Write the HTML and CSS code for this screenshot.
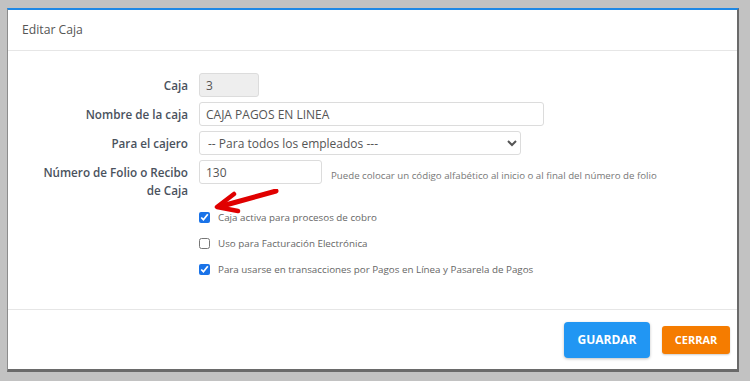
FILE: index.html
```html
<!DOCTYPE html>
<html lang="es">
<head>
  <meta charset="UTF-8">
  <title>Editar Caja</title>
  <link rel="stylesheet" href="styles.css">
</head>
<body>
  <div class="modal">
    <div class="modal-header">Editar Caja</div>
    <div class="modal-body">
      <div class="form-row">
        <label class="form-label">Caja</label>
        <input class="form-input input-caja" type="text" value="3" readonly>
      </div>
      <div class="form-row">
        <label class="form-label">Nombre de la caja</label>
        <input class="form-input input-nombre" type="text" value="CAJA PAGOS EN LINEA">
      </div>
      <div class="form-row">
        <label class="form-label">Para el cajero</label>
        <select class="form-input input-cajero">
          <option>-- Para todos los empleados ---</option>
        </select>
      </div>
      <div class="form-row">
        <label class="form-label">Número de Folio o Recibo de Caja</label>
        <div class="folio-group">
          <input class="form-input input-folio" type="text" value="130">
          <span class="help-text">Puede colocar un código alfabético al inicio o al final del número de folio</span>
        </div>
      </div>

      <div class="checks">
        <label class="check"><input type="checkbox" checked> Caja activa para procesos de cobro</label>
        <label class="check"><input type="checkbox"> Uso para Facturación Electrónica</label>
        <label class="check"><input type="checkbox" checked> Para usarse en transacciones por Pagos en Línea y Pasarela de Pagos</label>
        <!-- red marker arrow pointing at the first checkbox -->
        <svg class="arrow" width="70" height="30" viewBox="0 0 70 30">
          <path d="M62 2 L8 17" stroke="#e00000" stroke-width="5" stroke-linecap="round" fill="none"/>
          <path d="M20 5 L3 18 L24 22" stroke="#e00000" stroke-width="4.5" stroke-linecap="round" stroke-linejoin="round" fill="none"/>
        </svg>
      </div>
    </div>
    <div class="modal-footer">
      <button class="btn btn-guardar">GUARDAR</button>
      <button class="btn btn-cerrar">CERRAR</button>
    </div>
  </div>
</body>
</html>
```

FILE: styles.css
```css
body {
  margin: 0;
  padding: 8px 0 0 7px;
  background-color: #c2c2c2;
  font-family: "Open Sans", Arial, sans-serif;
  height: 381px;
  box-sizing: border-box;
  overflow: hidden;
}
.modal {
  width: 732px;
  height: 364px;
  box-sizing: border-box;
  background-color: #fff;
  border-top: 2px solid #1e88e5;
  border-left: 1px solid #8c8c8c;
  border-right: 2px solid #6a6a6a;
  border-bottom: 3px solid #6a6a6a;
  display: flex;
  flex-direction: column;
}
.modal-header {
  height: 41px;
  box-sizing: border-box;
  padding: 11px 0 0 14px;
  font-size: 12.2px;
  color: #555;
  border-bottom: 1px solid #e6e6e6;
}
.modal-body {
  flex: 1;
  padding: 22px 0 0 0;
  border-bottom: 1px solid #e6e6e6;
}
.form-row {
  display: grid;
  grid-template-columns: 180px 1fr;
  column-gap: 11px;
  margin-bottom: 5px;
}
.form-label {
  padding-left: 30px;
  text-align: right;
  font-size: 11.7px;
  font-weight: 600;
  color: #4a525d;
  line-height: 18px;
  padding-top: 3px;
}
.form-input {
  height: 24px;
  box-sizing: border-box;
  border: 1px solid #dcdcdc;
  border-radius: 3px;
  padding: 0 6px;
  font-family: "Open Sans", Arial, sans-serif;
  font-size: 12px;
  color: #555;
  background-color: #fff;
  outline: none;
}
.input-caja {
  width: 60px;
  background-color: #eeeeee;
}
.input-nombre {
  width: 345px;
}
.input-cajero {
  width: 322px;
  padding: 0 4px;
}
.folio-group {
  display: flex;
  align-items: flex-start;
}
.input-folio {
  width: 123px;
}
.help-text {
  margin-left: 9px;
  margin-top: 9px;
  font-size: 9.7px;
  color: #777;
}
.checks {
  position: relative;
  padding: 0 0 0 191px;
}
.check {
  display: flex;
  align-items: center;
  height: 26px;
  font-size: 9.8px;
  color: #666;
}
.check input {
  width: 11px;
  height: 11px;
  margin: 0 8px 0 0;
  accent-color: #1a73e8;
}
.arrow {
  position: absolute;
  left: 206px;
  top: -15px;
}
.modal-footer {
  height: 59px;
  display: flex;
  justify-content: flex-end;
  align-items: center;
  gap: 12px;
  padding-right: 7px;
}
.btn {
  border: none;
  color: #fff;
  font-family: "Open Sans", Arial, sans-serif;
  font-weight: 700;
  cursor: pointer;
}
.btn-guardar {
  width: 86px;
  height: 36px;
  border-radius: 4px;
  background-color: #2196f3;
  font-size: 12px;
  box-shadow: 0 1px 3px rgba(0, 0, 0, 0.25);
}
.btn-cerrar {
  width: 68px;
  height: 28px;
  border-radius: 3px;
  background-color: #f57c00;
  font-size: 11px;
  box-shadow: 0 1px 2px rgba(0, 0, 0, 0.2);
}
```
